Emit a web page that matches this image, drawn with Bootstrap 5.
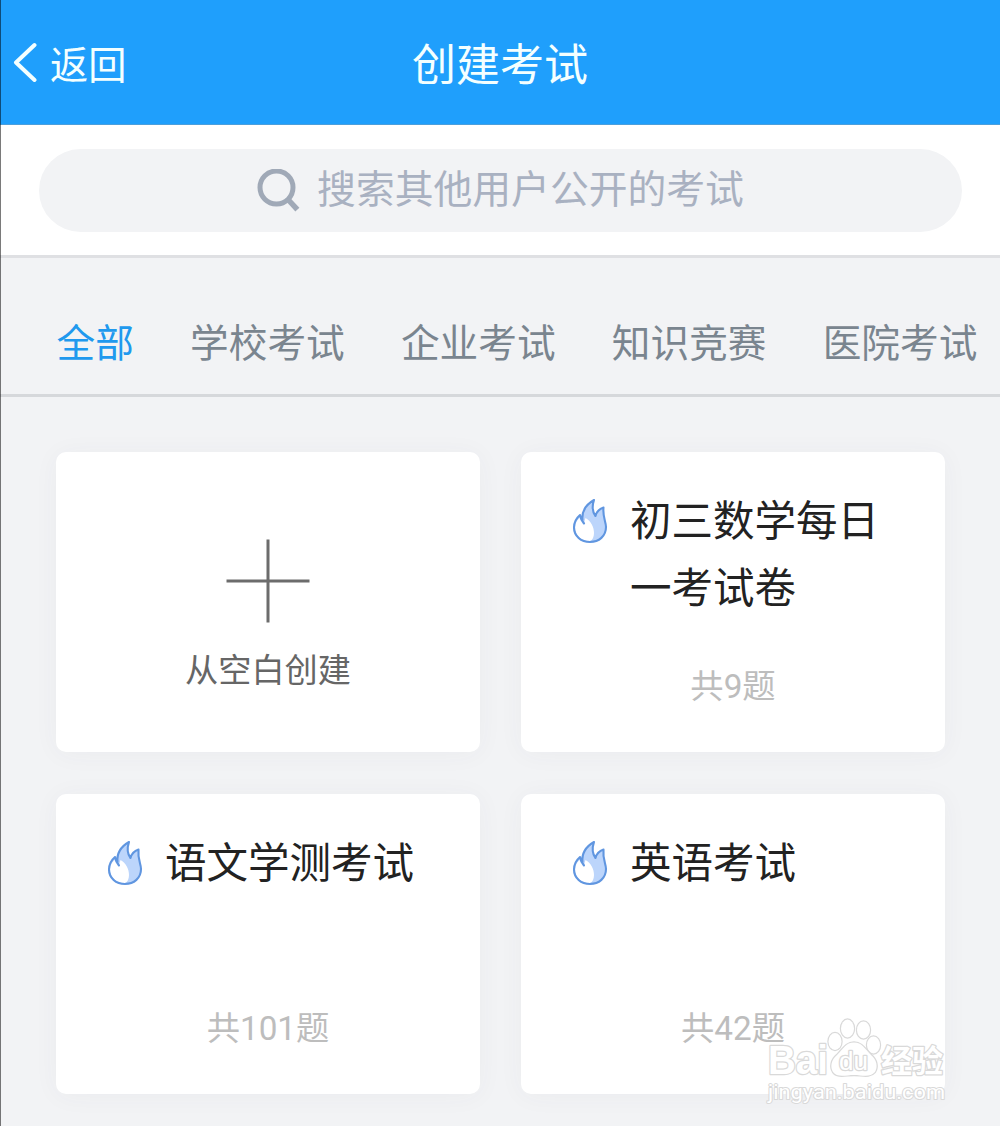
<!DOCTYPE html>
<html lang="zh-CN">
<head>
<meta charset="utf-8">
<meta name="viewport" content="width=device-width, initial-scale=1">
<title>创建考试</title>
<link href="https://cdn.jsdelivr.net/npm/bootstrap@5.3.0/dist/css/bootstrap.min.css" rel="stylesheet">
<style>
  body { background: #f2f3f5; font-family: Roboto, "Noto Sans CJK SC", sans-serif; width: 1000px; height: 1126px; overflow: hidden; }
  .screen { height: 1126px; }
  .edge-line { width: 1px; background: rgba(0,0,0,.52); z-index: 3; }
  .topbar { height: 125px; background: #1f9ffc; color: #f4ffff; border-bottom: 1px solid #4c9fdc; }
  .back-link { padding-left: 12px; font-size: 38.2px; line-height: 56px; color: inherit; gap: 13px; margin-top: 8px; }
  .back-link svg { margin-top: -9px; }
  .page-title { font-size: 44px; line-height: 64px; padding-top: 8px; font-weight: 400; }
  .search-zone { height: 130px; padding: 24px 38px 0 39px; }
  .search-pill { height: 83px; background: #f2f3f5; color: #a9b1c1; font-size: 38.8px; line-height: 56px; gap: 17px; }
  .search-pill span { margin: -2px 0 0 0; }
  .tab-strip { height: 142px; border-top: 3px solid #dfe0e3; border-bottom: 3px solid #d6d8db; padding-left: 56.5px; gap: 56.3px; }
  .tab-strip .nav-link { padding: 0; font-size: 38.65px; line-height: 56px; color: #7a858f; white-space: nowrap; margin-top: 35px; flex: none; }
  .tab-strip .nav-link.active { color: #2099ee; }
  .exam-grid { display: grid; grid-template-columns: 424px 424px; grid-auto-rows: 300px; gap: 42px 41px; padding: 55px 0 0 56px; }
  .exam-card { border: 0; border-radius: 10px; box-shadow: 0 2px 26px rgba(60,70,90,.045); }
  .card-head { padding: 36px 0 0 51px; gap: 22px; }
  .card-head svg { margin-top: 10px; flex: none; }
  .card-name { width: 260px; font-size: 41.5px; line-height: 67px; color: #222; font-weight: 400; }
  .total { font-size: 33.3px; line-height: 48px; color: #bdbdbd; padding-bottom: 41px; }
  .blank-card { padding-bottom: 57px; }
  .blank-label { font-size: 33.2px; line-height: 48px; color: #666; margin-top: 24px; }
  .watermark { position: absolute; left: 760px; top: 1012px; z-index: 2; }
</style>
</head>
<body>
<svg width="0" height="0" class="position-absolute" aria-hidden="true">
  <symbol id="flame" viewBox="0 0 36 46">
    <path d="M22 2C15 6 9.500 13 10 21C9 20 8.500 18.500 8 17C4.500 20 2 24 2 29.500C2 38 9 44 18 44C27 44 34 38 34 29C34 24 30.500 19 31.500 9.500C27 11 24.500 14 23.500 18C20.500 14 20 8 22 2Z" fill="#bcd5fb"/>
    <path d="M3 29C3.500 25 5 22 7.500 20L12 25L13.500 20C19 23 22 29 22 35C22 39 20.500 42 18 43C9 43 3 37 3 29Z" fill="#fff"/>
    <path d="M12 25.500C10.500 23.500 8.500 20.500 8 17C4.500 20 2 24 2 29.500C2 38 9 44 18 44C27 44 34 38 34 29C34 24 30.500 19 31.500 9.500C27 11 24.500 14 23.500 18C20.500 14 20 8 22 2C15 6 9.500 12 10.500 22" fill="none" stroke="#6096e0" stroke-width="2.100" stroke-linejoin="round" stroke-linecap="round"/>
  </symbol>
</svg>
<div class="screen position-relative overflow-hidden">
  <div class="edge-line position-absolute top-0 start-0 h-100"></div>

  <header class="topbar row g-0 align-items-center">
    <div class="col-4">
      <a href="#" class="back-link d-inline-flex align-items-center text-decoration-none">
        <svg width="25" height="40" viewBox="0 0 25 40"><path d="M22.500 3L4 20.500L22.500 38" fill="none" stroke="#f4ffff" stroke-width="4" stroke-linecap="round" stroke-linejoin="round"/></svg>
        <span>返回</span>
      </a>
    </div>
    <h1 class="page-title col-4 text-center mb-0">创建考试</h1>
  </header>

  <div class="search-zone bg-white">
    <div class="search-pill rounded-pill d-flex align-items-center justify-content-center">
      <svg width="43" height="43" viewBox="0 0 43 43"><circle cx="19.500" cy="18.500" r="16.500" fill="none" stroke="#a0a9b7" stroke-width="5"/><path d="M32 31.500L38.500 38.500" stroke="#a0a9b7" stroke-width="5.500" stroke-linecap="square"/></svg>
      <span>搜索其他用户公开的考试</span>
    </div>
  </div>

  <nav class="tab-strip nav flex-nowrap align-items-center">
    <a class="nav-link active" href="#">全部</a>
    <a class="nav-link" href="#">学校考试</a>
    <a class="nav-link" href="#">企业考试</a>
    <a class="nav-link" href="#">知识竞赛</a>
    <a class="nav-link" href="#">医院考试</a>
  </nav>

  <main class="exam-grid">
    <div class="card exam-card blank-card align-items-center justify-content-end">
      <svg width="84" height="84" viewBox="0 0 84 84"><path d="M42 0.500V83.500M0.500 42H83.500" stroke="#6c6c6c" stroke-width="3"/></svg>
      <div class="blank-label">从空白创建</div>
    </div>
    <div class="card exam-card">
      <div class="card-head d-flex align-items-start"><svg width="36" height="46"><use href="#flame"/></svg><div class="card-name">初三数学每日一考试卷</div></div>
      <div class="total text-center mt-auto">共9题</div>
    </div>
    <div class="card exam-card">
      <div class="card-head d-flex align-items-start"><svg width="36" height="46"><use href="#flame"/></svg><div class="card-name">语文学测考试</div></div>
      <div class="total text-center mt-auto">共101题</div>
    </div>
    <div class="card exam-card">
      <div class="card-head d-flex align-items-start"><svg width="36" height="46"><use href="#flame"/></svg><div class="card-name">英语考试</div></div>
      <div class="total text-center mt-auto">共42题</div>
    </div>
  </main>

  <svg class="watermark" width="200" height="100" viewBox="0 0 200 100" fill="#fff" stroke="#d9d9d9" stroke-width="2" stroke-linejoin="round" paint-order="stroke">
    <text x="8" y="62" font-family="Liberation Sans, sans-serif" font-weight="700" font-size="40" textLength="60" lengthAdjust="spacingAndGlyphs" stroke-width="2.500">Bai</text>
    <g stroke-width="2.400">
      <ellipse cx="75" cy="29.500" rx="6.500" ry="8.500"/><ellipse cx="87.500" cy="16.500" rx="6.500" ry="9"/><ellipse cx="103.500" cy="18" rx="6.500" ry="8.500"/><ellipse cx="113.500" cy="33" rx="6.500" ry="8.500"/>
      <path d="M94 30.500C86 30.500 83 37 77 43C71 48 70 55 73 60C77 66 86 63 94 63C102 63 110 66 115 60C118 55 117 48 111 43C105 37 102 30.500 94 30.500Z"/>
    </g>
    <text x="79" y="58" font-family="Liberation Sans, sans-serif" font-size="25" textLength="29" lengthAdjust="spacingAndGlyphs" stroke-width="2.500">du</text>
    <text x="121" y="60" font-family="Noto Sans CJK SC, sans-serif" font-weight="700" font-size="31" textLength="62" lengthAdjust="spacingAndGlyphs" stroke-width="2.500">经验</text>
    <text x="8" y="87" font-family="Roboto, sans-serif" font-size="20" textLength="177" lengthAdjust="spacingAndGlyphs">jingyan.baidu.com</text>
  </svg>
</div>
<script src="https://cdn.jsdelivr.net/npm/bootstrap@5.3.0/dist/js/bootstrap.bundle.min.js"></script>
</body>
</html>
